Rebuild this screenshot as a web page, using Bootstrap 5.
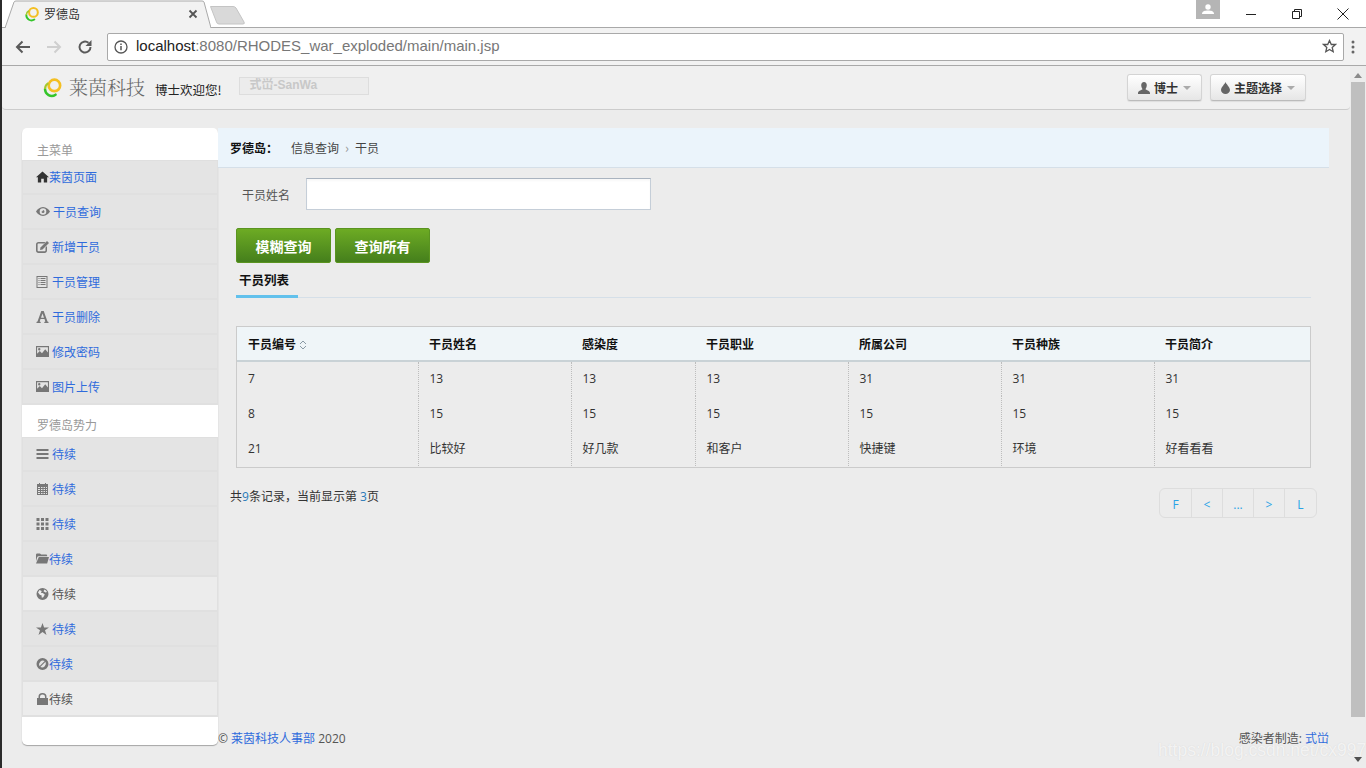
<!DOCTYPE html>
<html lang="zh">
<head>
<meta charset="utf-8">
<title>罗德岛</title>
<link rel="stylesheet" href="https://cdn.jsdelivr.net/npm/bootstrap@5.3.0/dist/css/bootstrap.min.css">
<style>
html,body{height:100%;overflow:hidden}
body{font-family:"Open Sans","Noto Sans CJK SC",sans-serif;font-size:12px;color:#333;background:#ececec}
a{text-decoration:none}
.desk-edge{width:2px;background:#2b2b2b;flex:none}
.win{height:768px}
.tabstrip{height:28px;background:#fff;border-bottom:1px solid #a9a9a9;position:relative}
.tabshape{position:relative;width:206px;height:28px;margin-left:3px;font-family:"Noto Sans CJK SC",sans-serif;font-size:12px;color:#333}
.tabshape>svg.bgshape{position:absolute;left:0;top:0}
.tabinner{position:relative;height:28px;padding-left:19px;padding-right:13px}
.newtab{margin-left:-1px;margin-top:6px}
.acct{width:24px;height:19px;background:#b5b5b5;position:absolute;left:1194px;top:0}
.winbtn{width:46px;height:28px}
.addr{height:38px;background:#f2f2f2;border-bottom:1px solid #a9a9a9;padding:0 7px 0 9px}
.navico{width:24px;height:24px;margin-right:7px}
.omni{height:28px;width:1237px;margin-left:3px;background:#fff;border:1px solid #a9a9a9;border-radius:2px;font-family:"Liberation Sans",sans-serif;font-size:15px;color:#777;padding:0 6px}
.omni b{font-weight:400;color:#222}
.sbar{width:16px;background:#ececec;flex:none;position:relative}
.sbthumb{width:14px;height:635px;background:#bfbfbf;margin:16px 0 0 1px}
.arr-u,.arr-d{width:0;height:0;border-left:4px solid transparent;border-right:4px solid transparent;position:absolute;left:4px}
.arr-u{border-bottom:5px solid #8a8a8a;top:7px}
.arr-d{border-top:5px solid #505050;bottom:6px}
.topbar{height:44px;background:#f0f0f0;border-bottom:1px solid #ccc;padding:0 44px 0 40px;border-radius:0 0 4px 4px;flex:none}
.brand-txt{font-family:"Noto Serif CJK SC","Noto Sans CJK SC",serif;font-size:19px;color:#666;font-weight:300;margin-left:6px;letter-spacing:0}
.hello{font-family:"Noto Sans CJK SC",sans-serif;font-size:12.5px;color:#222;margin-left:10px;margin-top:5px}
.sanwa{width:130px;height:18px;background:#ececec;border:1px solid #ddd;margin-left:17px;margin-bottom:3px;color:#c8c8c8;font-weight:700;font-size:12px;padding-left:10px;line-height:15px;font-family:"Liberation Sans","Noto Sans CJK SC",sans-serif}
.topbtn{height:27px;padding:0 10px;background:linear-gradient(#fff,#e6e6e6);border:1px solid #d4d4d4;border-bottom-color:#bbb;border-radius:3px;font-size:12px;font-weight:700;color:#333;box-shadow:0 1px 1px rgba(0,0,0,.08);line-height:1;font-family:"Noto Sans CJK SC",sans-serif}
.topbtn:hover{background:#e6e6e6}
.caret-s{display:inline-block;width:0;height:0;border-left:4px solid transparent;border-right:4px solid transparent;border-top:4px solid #aaa;margin-left:5px;vertical-align:middle}
.bodyrow{padding:18px 0 0 20px;flex:1 1 0;min-height:0}
.sidepanel{width:196px;height:617px;background:#fff;border-radius:5px;box-shadow:0 1px 1px rgba(0,0,0,.3);flex:none}
.sidehead{color:#999;font-size:12px;padding-left:15px;line-height:18px;font-family:"Noto Sans CJK SC",sans-serif}
.sh1{height:32px;padding-top:13px}
.sh2{height:32px;padding-top:11px}
.sidelist{--bs-list-group-bg:transparent;border-radius:0;border:0}
.sidelist .list-group-item{height:35px;background:#e4e4e4;border:1px solid #e0e0e0;border-width:0 1px 2px 1px;padding:0 0 0 13px;font-size:12px;display:flex;align-items:center;font-family:"Noto Sans CJK SC",sans-serif;color:#555;border-radius:0;margin:0}
.sidelist .list-group-item:first-child{border-top:1px solid #dfdfdf}
.sidelist .list-group-item+.list-group-item{border-top-width:0}
.sidelist .lightrow{background:#ececec}
.sidelist .list-group-item a{color:#2f6bdc}
.sidelist svg{flex:none;fill:#777}
.gp3{margin-right:3px}
.gp0{margin-right:0}
.mainpane{width:1111px;flex:none}
.crumb{height:40px;background:#ebf4fb;border-bottom:1px solid #d5dfe8;padding-left:12px;margin:0;font-family:"Noto Sans CJK SC",sans-serif;font-size:12px;--bs-breadcrumb-margin-bottom:0}
.crumb strong{color:#111;margin-right:13px}
.crumb .sep{color:#999;margin:0 6px;font-size:13px}
.crumb span{color:#444}
.fieldrow{padding:10px 0 0 24px;height:60px;font-family:"Noto Sans CJK SC",sans-serif}
.fieldrow label{width:64px;margin:0;color:#555}
.namebox{width:345px;height:32px;border-radius:0;border:1px solid #c5ced8;border-top-color:#a9b3bf;box-shadow:inset 0 2px 2px rgba(0,0,0,.03);background:#fff}
.btnrow{padding-left:18px;gap:4px}
.greenbtn{width:95px;height:35px;padding:0;background:linear-gradient(#6dab24,#457f1c);border:1px solid #5a9420;border-radius:2px;color:#fff;font-weight:700;font-size:14px;line-height:1;font-family:"Noto Sans CJK SC",sans-serif}
.greenbtn:hover{color:#fff;background:linear-gradient(#6dab24,#457f1c)}
.tabline{margin:0 18px 0 18px;border-bottom:1px solid #d5dfe8;height:35px;padding-left:0}
.tabcur{display:block;width:62px;height:35px;border-bottom:3px solid #62c1ec;color:#111;font-weight:700;font-size:12.5px;padding:7px 0 0 3px;font-family:"Noto Sans CJK SC",sans-serif;line-height:20px}
.datawrap{margin:28px 18px 0 18px;border:1px solid #cbcbcb;height:142px}
.datatab{--bs-table-bg:transparent;margin:0;table-layout:fixed;width:100%;font-size:12px;color:#333}
.datatab th{height:34px;background:#eff5f8;border-bottom:2px solid #c9d2d6;font-weight:700;color:#111;padding:0 0 0 11px;vertical-align:middle;white-space:nowrap;font-family:"Noto Sans CJK SC",sans-serif;box-shadow:none}
.datatab td{height:35px;padding:0 0 0 11px;border-bottom:0;border-left:1px dotted #bdbdbd;vertical-align:middle;font-family:"Open Sans","Noto Sans CJK SC",sans-serif}
.datatab td:first-child{border-left:0}
.datatab tr:last-child td{height:35px}
.pagerow{padding:0 12px 0 12px;margin-top:14px;height:60px}
.counttxt{margin-top:6px;font-family:"Open Sans","Noto Sans CJK SC",sans-serif}
.counttxt i{font-style:normal;color:#2a7ab8}
.pgbar{--bs-pagination-font-size:12px;margin:6px 0 0;height:30px}
.pgbar .page-link{width:32px;height:30px;padding:0;background:transparent;border:1px solid #ddd;color:#2aa3e6;display:flex;align-items:center;justify-content:center;padding-top:3px;font-size:12px}
.pgbar .page-item:first-child .page-link{border-radius:6px 0 0 6px;width:33px}
.pgbar .page-item:last-child .page-link{border-radius:0 6px 6px 0;width:33px}
.pgbar .page-item+.page-item .page-link{margin-left:-1px}
.footrow{height:30px;padding:0;margin-top:188px;color:#555;font-size:12px;font-family:"Open Sans","Noto Sans CJK SC",sans-serif}
.footrow a{color:#2f6bdc}
.wmark{position:absolute;left:1158px;top:737px;font-family:"Liberation Sans",sans-serif;font-size:17.5px;color:rgba(255,255,255,.72);text-shadow:0 0 1px rgba(190,190,190,.55);pointer-events:none;white-space:nowrap}
</style>
</head>
<body>
<svg width="0" height="0" class="d-block position-absolute">
 <defs>
  <symbol id="logo" viewBox="0 0 22 22">
   <path d="M3.2 12.5a7 7 0 0 0 11 6" fill="none" stroke="#35c52a" stroke-width="2.6" stroke-linecap="round"/>
   <circle cx="13" cy="8.8" r="6" fill="none" stroke="#f4bf22" stroke-width="2.8"/>
   <path d="M3.2 12.5a7 7 0 0 1 3.5-6" fill="none" stroke="#a6c92c" stroke-width="2.2"/>
  </symbol>
  <symbol id="i-home" viewBox="0 0 14 12"><path fill="#333" d="M7 0 14 6.3h-2V12H8.4V8H5.6v4H2V6.3H0z"/></symbol>
  <symbol id="i-eye" viewBox="0 0 14 9"><path fill-rule="evenodd" d="M7 0c3.200 0 5.600 2.200 7 4.500C12.600 6.800 10.200 9 7 9S1.400 6.800 0 4.500C1.400 2.200 3.800 0 7 0zm0 1.200a3.300 3.300 0 1 0 0 6.600 3.300 3.300 0 0 0 0-6.600zM7 3a1.500 1.500 0 1 1-1.500 1.500C6.300 4.500 7 3.800 7 3z"/></symbol>
  <symbol id="i-edit" viewBox="0 0 13 12"><path d="M2.500 1h7l-1.300 1.400H2.600c-.6 0-1 .4-1 1v5.900c0 .6.400 1 1 1h5.900c.6 0 1-.4 1-1V6.500L11 5v4.500C11 11 10 12 8.700 12H2.500C1 12 0 11 0 9.500v-6C0 2 1 1 2.500 1z"/><path d="M11 0l2 2-6.500 6.500-2.500.5.500-2.500zM11 0"/></symbol>
  <symbol id="i-list" viewBox="0 0 12 12"><path fill-rule="evenodd" d="M0 0h11v12H0zM1 1v10h9V1zM2 2h1v1H2zm2 0h5v1H4zM2 4h1v1H2zm2 0h5v1H4zM2 6h1v1H2zm2 0h5v1H4zM2 8h1v1H2zm2 0h5v1H4z"/></symbol>
  <symbol id="i-font" viewBox="0 0 12 12"><path fill-rule="evenodd" d="M4.800 0h2.400L11 10.600l1 .4v1H7.800v-1l1-.4-.8-2.600H4l-.8 2.600 1 .4v1H0v-1l1-.4zM6 2.500 4.500 6.700h3z"/></symbol>
  <symbol id="i-pic" viewBox="0 0 12 10"><path fill-rule="evenodd" d="M0 0h12v10H0zm1 1v6l2.500-2.500L5.500 6.500 8.500 3 11 6V1zm2 .8a1.100 1.100 0 1 1 0 2.200 1.100 1.100 0 0 1 0-2.200z"/></symbol>
  <symbol id="i-menu" viewBox="0 0 12 12"><path d="M0 1h12v2H0zM0 5h12v2H0zM0 9h12v2H0z"/></symbol>
  <symbol id="i-cal" viewBox="0 0 11 12"><path fill-rule="evenodd" d="M0 1h2V0h1v1h5V0h1v1h2v11H0zm1 3v1h2V4zm3 0v1h1.500V4zm2.500 0v1H8V4zM9 4v1h1V4zM1 6v1h2V6zm3 0v1h1.500V6zm2.500 0v1H8V6zM9 6v1h1V6zM1 8v1h2V8zm3 0v1h1.500V8zm2.500 0v1H8V8zM9 8v1h1V8zM1 10v1h2v-1zm3 0v1h1.500v-1zm2.500 0v1H8v-1zM9 10v1h1v-1z"/></symbol>
  <symbol id="i-grid" viewBox="0 0 12 12"><path d="M0 0h3v3H0zM4.500 0h3v3h-3zM9 0h3v3H9zM0 4.500h3v3H0zM4.500 4.500h3v3h-3zM9 4.500h3v3H9zM0 9h3v3H0zM4.500 9h3v3h-3zM9 9h3v3H9z"/></symbol>
  <symbol id="i-folder" viewBox="0 0 14 11"><path d="M0 1.500C0 .7.500 0 1.300 0h3L5.500 1.300h5.500c.6 0 1 .4 1 1V3H3C2 3 1.500 3.600 1.200 4.300L0 8.500z"/><path d="M3 4h11l-2 7H0z"/></symbol>
  <symbol id="i-globe" viewBox="0 0 12 12"><path fill-rule="evenodd" d="M6 0a6 6 0 1 1 0 12A6 6 0 0 1 6 0zM3 2 1.500 4.500 3.500 7l1.500.3.300 2.500 1.500-.5 1.500-2.800-2-1.500L4.500 5l.7-2zM8 1.500 7 3.200l2 1.300 1.500-.5C10 2.800 9 2 8 1.500z"/></symbol>
  <symbol id="i-star" viewBox="0 0 13 12"><path d="M6.500 0l1.600 4.400h4.900L9 7.300l1.500 4.700-4-2.900-4 2.900L4 7.300 0 4.400h4.900z"/></symbol>
  <symbol id="i-ban" viewBox="0 0 12 12"><path fill-rule="evenodd" d="M6 0a6 6 0 1 1 0 12A6 6 0 0 1 6 0zM3 8.200 8.200 3A3.900 3.900 0 0 0 3 8.200zM3.800 9A3.900 3.900 0 0 0 9 3.800z"/></symbol>
  <symbol id="i-lock" viewBox="0 0 11 12"><path fill-rule="evenodd" d="M1.500 5V3.500a4 3.500 0 0 1 8 0V5h1.500v7H0V5zM3 5h5V3.700a2.500 2.200 0 0 0-5 0z"/></symbol>
 </defs>
</svg>

<div class="win d-flex">
 <div class="desk-edge"></div>
 <div class="flex-grow-1 d-flex flex-column">
  <div class="tabstrip d-flex">
   <div class="tabshape">
    <svg class="bgshape" width="206" height="29"><path d="M0 28 9 2Q9.500 1 11 1H197Q198.500 1 199 2L206 28" fill="#f2f2f2" stroke="#a9a9a9"/></svg>
    <div class="tabinner d-flex align-items-center">
     <svg width="16" height="16"><use href="#logo"/></svg>
     <span class="ms-1 flex-grow-1">罗德岛</span>
     <svg width="10" height="10" viewBox="0 0 10 10"><path d="M1.500 1.500l7 7m0-7l-7 7" stroke="#555" stroke-width="1.800"/></svg>
    </div>
   </div>
   <svg class="newtab" width="36" height="19"><path d="M.5.500H23Q25 .5 26 2L34 16Q35 18 33 18H9Q7 18 6.500 16z" fill="#d9d9d9" stroke="#c4c4c4"/></svg>
   <div class="acct d-flex justify-content-center align-items-center">
    <svg width="12" height="11" viewBox="0 0 12 11"><circle cx="6" cy="3" r="2.700" fill="#fff"/><path d="M0 10c0-3 3-3.500 6-3.500s6 .5 6 3.500z" fill="#fff"/></svg>
   </div>
   <div class="ms-auto d-flex">
    <div class="winbtn d-flex align-items-center justify-content-center"><svg width="10" height="10"><path d="M0 5.500h10" stroke="#222"/></svg></div>
    <div class="winbtn d-flex align-items-center justify-content-center"><svg width="10" height="10"><path d="M.5 2.500h7v7h-7zM2.500 2.500v-2h7v7h-2" fill="none" stroke="#222"/></svg></div>
    <div class="winbtn d-flex align-items-center justify-content-center"><svg width="12" height="12"><path d="M.5.500l11 11m0-11l-11 11" stroke="#222"/></svg></div>
   </div>
  </div>
  <div class="addr d-flex align-items-center">
   <div class="navico d-flex align-items-center justify-content-center"><svg width="16" height="14" viewBox="0 0 16 14"><path d="M15 7H2M7.500 1.500 2 7l5.500 5.500" fill="none" stroke="#5a5a5a" stroke-width="2"/></svg></div>
   <div class="navico d-flex align-items-center justify-content-center"><svg width="16" height="14" viewBox="0 0 16 14"><path d="M1 7h13M8.500 1.500 14 7l-5.500 5.500" fill="none" stroke="#cfcfcf" stroke-width="2"/></svg></div>
   <div class="navico d-flex align-items-center justify-content-center"><svg width="16" height="16" viewBox="0 0 16 16"><path d="M13.500 8A5.500 5.500 0 1 1 11.500 3.800" fill="none" stroke="#5a5a5a" stroke-width="2"/><path d="M14.500 1v6h-6z" fill="#5a5a5a"/></svg></div>
   <div class="omni d-flex align-items-center">
    <svg class="me-2" width="14" height="14" viewBox="0 0 14 14"><circle cx="7" cy="7" r="6" fill="none" stroke="#555" stroke-width="1.300"/><path d="M7 6v4.200M7 3.500v1.500" stroke="#555" stroke-width="1.500"/></svg>
    <span><b>localhost</b>:8080/RHODES_war_exploded/main/main.jsp</span>
    <svg class="ms-auto" width="15" height="15" viewBox="0 0 15 15"><path d="M7.500 1.500l1.800 4h4.200l-3.300 2.900 1 4.300-3.700-2.300-3.700 2.300 1-4.300L1.500 5.500h4.200z" fill="none" stroke="#555" stroke-width="1.300"/></svg>
   </div>
   <svg class="ms-auto me-1" width="4" height="14"><circle cx="2" cy="2" r="1.500" fill="#666"/><circle cx="2" cy="7" r="1.500" fill="#666"/><circle cx="2" cy="12" r="1.500" fill="#666"/></svg>
  </div>
  <div class="d-flex flex-grow-1" style="min-height:0">
   <div class="flex-grow-1 d-flex flex-column">
    <nav class="topbar d-flex align-items-center">
     <svg width="21" height="21"><use href="#logo"/></svg>
     <span class="brand-txt">莱茵科技</span>
     <span class="hello">博士欢迎您!</span>
     <div class="sanwa">式峃-SanWa</div>
     <button class="btn topbtn ms-auto d-flex align-items-center" type="button">
      <svg class="me-1" width="12" height="12" viewBox="0 0 12 12"><path fill="#666" d="M6 0c1.800 0 2.800 1.300 2.800 3.200S7.800 6.500 7.500 7.200C8 8 12 8.500 12 11v1H0v-1c0-2.500 4-3 4.500-3.800C4.200 6.500 3.200 5 3.200 3.200S4.200 0 6 0z"/></svg>博士<i class="caret-s"></i>
     </button>
     <button class="btn topbtn ms-2 d-flex align-items-center" type="button">
      <svg class="me-1" width="9" height="12" viewBox="0 0 9 12"><path fill="#666" d="M4.500 0C5 2 9 5 9 8a4.500 4 0 0 1-9 0C0 5 4 2 4.500 0z"/></svg>主题选择<i class="caret-s"></i>
     </button>
    </nav>
    <div class="bodyrow d-flex">
     <aside class="sidepanel">
      <div class="sidehead sh1">主菜单</div>
      <ul class="list-group sidelist">
       <li class="list-group-item"><svg width="13" height="12"><use href="#i-home"/></svg><a href="#">莱茵页面</a></li>
       <li class="list-group-item"><svg class="gp3" width="14" height="9"><use href="#i-eye"/></svg><a href="#">干员查询</a></li>
       <li class="list-group-item"><svg class="gp3" width="13" height="12"><use href="#i-edit"/></svg><a href="#">新增干员</a></li>
       <li class="list-group-item"><svg class="gp3" width="13" height="12"><use href="#i-list"/></svg><a href="#">干员管理</a></li>
       <li class="list-group-item"><svg class="gp3" width="13" height="12"><use href="#i-font"/></svg><a href="#">干员删除</a></li>
       <li class="list-group-item"><svg class="gp3" width="13" height="11"><use href="#i-pic"/></svg><a href="#">修改密码</a></li>
       <li class="list-group-item"><svg class="gp3" width="13" height="11"><use href="#i-pic"/></svg><a href="#">图片上传</a></li>
      </ul>
      <div class="sidehead sh2">罗德岛势力</div>
      <ul class="list-group sidelist">
       <li class="list-group-item"><svg class="gp3" width="13" height="12"><use href="#i-menu"/></svg><a href="#">待续</a></li>
       <li class="list-group-item"><svg class="gp3" width="13" height="12"><use href="#i-cal"/></svg><a href="#">待续</a></li>
       <li class="list-group-item"><svg class="gp3" width="13" height="12"><use href="#i-grid"/></svg><a href="#">待续</a></li>
       <li class="list-group-item"><svg width="13" height="11"><use href="#i-folder"/></svg><a href="#">待续</a></li>
       <li class="list-group-item lightrow"><svg class="gp3" width="13" height="12"><use href="#i-globe"/></svg>待续</li>
       <li class="list-group-item"><svg class="gp3" width="13" height="12"><use href="#i-star"/></svg><a href="#">待续</a></li>
       <li class="list-group-item"><svg width="13" height="12"><use href="#i-ban"/></svg><a href="#">待续</a></li>
       <li class="list-group-item lightrow"><svg width="13" height="12"><use href="#i-lock"/></svg>待续</li>
      </ul>
     </aside>
     <main class="mainpane">
      <div class="crumb d-flex align-items-center"><strong>罗德岛：</strong><span>信息查询</span><span class="sep">›</span><span>干员</span></div>
      <div class="fieldrow d-flex align-items-start"><label class="pt-2" for="nm">干员姓名</label><input id="nm" class="form-control namebox" type="text"></div>
      <div class="btnrow d-flex"><button class="btn greenbtn" type="button">模糊查询</button><button class="btn greenbtn" type="button">查询所有</button></div>
      <div class="tabline"><span class="tabcur">干员列表</span></div>
      <div class="datawrap">
       <table class="table datatab">
        <colgroup><col style="width:181px"><col style="width:153px"><col style="width:124px"><col style="width:153px"><col style="width:153px"><col style="width:153px"><col></colgroup>
        <thead><tr><th>干员编号 <svg width="8" height="10" viewBox="0 0 8 10"><path d="M1 4l3-3 3 3M1 6l3 3 3-3" fill="none" stroke="#8a9aa5"/></svg></th><th>干员姓名</th><th>感染度</th><th>干员职业</th><th>所属公司</th><th>干员种族</th><th>干员简介</th></tr></thead>
        <tbody>
         <tr><td>7</td><td>13</td><td>13</td><td>13</td><td>31</td><td>31</td><td>31</td></tr>
         <tr><td>8</td><td>15</td><td>15</td><td>15</td><td>15</td><td>15</td><td>15</td></tr>
         <tr><td>21</td><td>比较好</td><td>好几款</td><td>和客户</td><td>快捷键</td><td>环境</td><td>好看看看</td></tr>
        </tbody>
       </table>
      </div>
      <div class="pagerow d-flex justify-content-between align-items-start">
       <div class="counttxt">共<i>9</i>条记录，当前显示第 <i>3</i>页</div>
       <ul class="pagination pgbar">
        <li class="page-item"><a class="page-link" href="#">F</a></li>
        <li class="page-item"><a class="page-link" href="#">&lt;</a></li>
        <li class="page-item"><a class="page-link" href="#">...</a></li>
        <li class="page-item"><a class="page-link" href="#">&gt;</a></li>
        <li class="page-item"><a class="page-link" href="#">L</a></li>
       </ul>
      </div>
      <div class="footrow d-flex justify-content-between"><div>© <a href="#">莱茵科技人事部</a> 2020</div><div>感染者制造: <a href="#">式峃</a></div></div>
     </main>
    </div>
   </div>
   <div class="sbar"><div class="sbthumb"></div><i class="arr-u"></i><i class="arr-d"></i></div>
  </div>
 </div>
</div>
<div class="wmark">https://blog.csdn.net/cx9977</div>
</body>
</html>
